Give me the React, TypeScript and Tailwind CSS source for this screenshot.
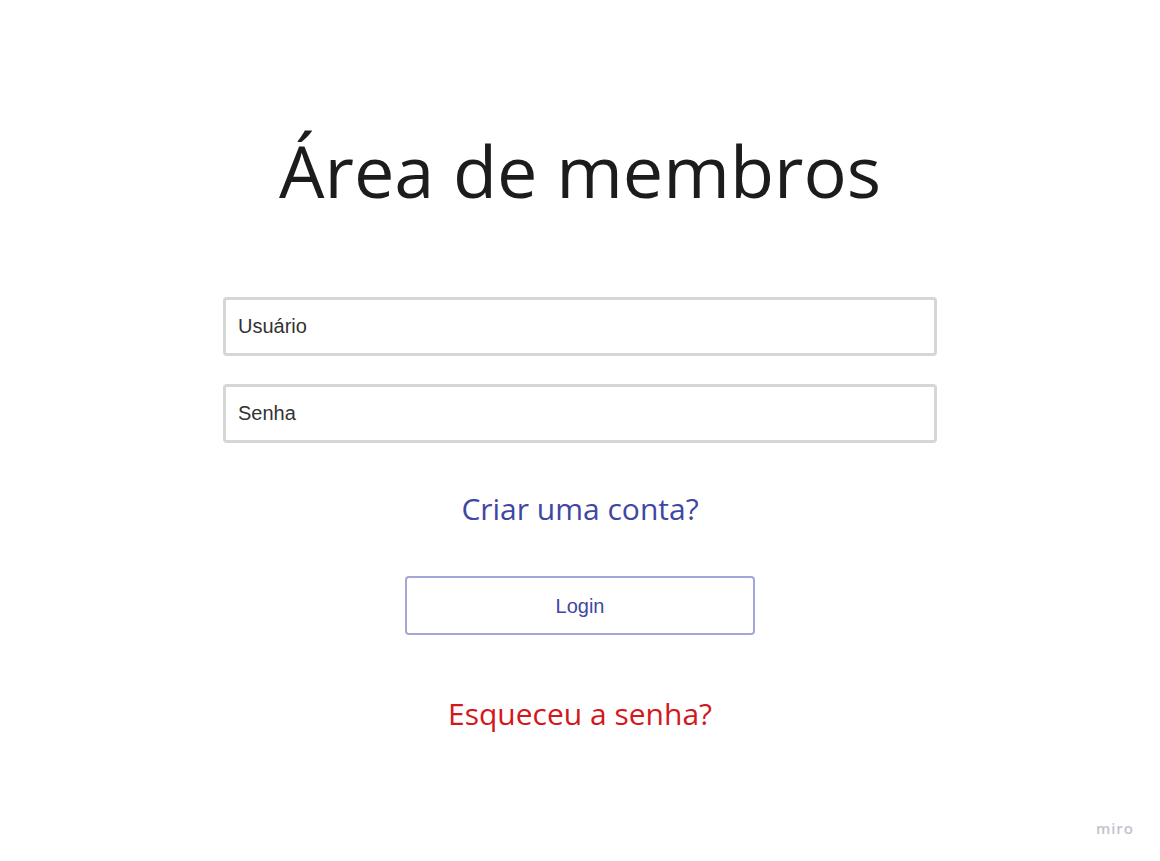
import React from 'react'

export default function App() {
  return (
    <div className="relative min-h-[861px] w-full bg-white">
      <div className="flex flex-col items-center pt-[134px]">
        <h1 className="text-[72px] leading-[72px] text-[#1c1c1c] font-['Open_Sans',sans-serif]">
          Área de membros
        </h1>

        <div className="mt-[91px] flex w-[714px] flex-col gap-[28px]">
          <input
            placeholder="Usuário"
            className="h-[59px] w-full rounded-[4px] border-[3px] border-[#d6d6d6] px-[12px] text-[20px] text-[#333] placeholder:text-[#333] outline-none font-['Liberation_Sans',Arial,sans-serif]"
          />
          <input
            type="password"
            placeholder="Senha"
            className="h-[59px] w-full rounded-[4px] border-[3px] border-[#d6d6d6] px-[12px] text-[20px] text-[#333] placeholder:text-[#333] outline-none font-['Liberation_Sans',Arial,sans-serif]"
          />
        </div>

        <a className="mt-[46px] text-[30px] leading-[40px] text-[#4047a3] font-['Open_Sans',sans-serif] cursor-pointer">
          Criar uma conta?
        </a>

        <button className="mt-[47px] h-[59px] w-[350px] rounded-[4px] border-[2px] border-[#a3a6d8] text-[20px] text-[#4047a3] font-['Liberation_Sans',Arial,sans-serif]">
          Login
        </button>

        <a className="mt-[59px] text-[30px] leading-[40px] text-[#d4171b] font-['Open_Sans',sans-serif] cursor-pointer">
          Esqueceu a senha?
        </a>
      </div>

      <span className="absolute right-[26px] bottom-[22px] text-[15px] font-semibold tracking-[1px] text-[#c2c3cc] font-['Open_Sans',sans-serif]">
        miro
      </span>
    </div>
  )
}
